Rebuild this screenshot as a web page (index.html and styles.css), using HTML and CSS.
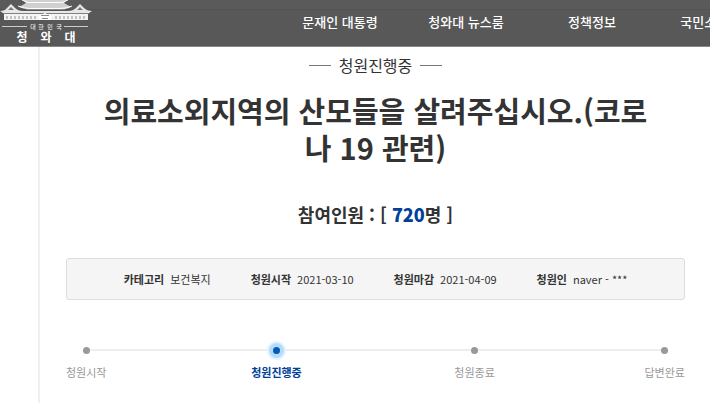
FILE: index.html
```html
<!DOCTYPE html>
<html lang="ko">
<head>
    <meta charset="UTF-8">
    <meta name="viewport" content="width=device-width, initial-scale=1.0">
    <title>국민청원 - 청와대</title>
    <link rel="stylesheet" href="styles.css">
</head>
<body>
    <header class="header">
        <a class="logo" href="#" aria-label="대한민국 청와대">
            <svg width="92" height="46" viewBox="0 0 92 46">
                <!-- upper roof -->
                <path d="M23 0H67L64 3L71 7Q68 9 62 9H29Q23 9 19 7L26 3Z" fill="#d0d0d0"/>
                <path d="M22 0L28 2.5H62L68 0M18 6Q24 8.5 30 8.5H60Q66 8.5 72 6" fill="none" stroke="#fff" stroke-width="1"/>
                <path d="M26 9.5H65" stroke="#8a8a8a" stroke-width="1"/>
                <!-- side roofs -->
                <path d="M0 11Q5 11 7 8L11 4L15 8Q18 11 23 11H68Q73 11 76 8L80 4L84 8Q87 11 92 11L89 13H3Z" fill="#e8e8e8"/>
                <path d="M8 10L11 7L14 10ZM77 10L80 7L83 10Z" fill="#777"/>
                <!-- columns -->
                <path d="M3 13.5H89" stroke="#808080" stroke-width="1"/>
                <path d="M4 14H88V20H4Z" fill="#f4f4f4"/>
                <path d="M7 16V19M11 16V19M15 16V19M19 16V19M23 16V19M27 16V19M31 16V19M35 16V19M56 16V19M60 16V19M64 16V19M68 16V19M72 16V19M76 16V19M80 16V19M84 16V19" stroke="#909090" stroke-width="1"/>
                <path d="M39 16L45 13L51 16V20H39Z" fill="#fff"/>
                <path d="M41 15.5H49M42 18.5H48" stroke="#8b8b8b" stroke-width="1"/>
                <path d="M2 26.5H27M64 26.5H88" stroke="#ccc" stroke-width="1"/>
                <g class="logo-country">
                    <text x="33" y="29">대</text>
                    <text x="41" y="29">한</text>
                    <text x="50" y="29">민</text>
                    <text x="59" y="29">국</text>
                </g>
                <g class="logo-name">
                    <text x="22" y="42">청</text>
                    <text x="46" y="42">와</text>
                    <text x="70" y="42">대</text>
                </g>
            </svg>
        </a>
        <nav class="gnb">
            <a href="#">문재인 대통령</a>
            <a href="#">청와대 뉴스룸</a>
            <a href="#">정책정보</a>
            <a href="#">국민소통 광장</a>
        </nav>
    </header>
    <main class="petition">
        <p class="petition-state">청원진행중</p>
        <h1 class="petition-title">의료소외지역의 산모들을 살려주십시오.(코로나 19 관련)</h1>
        <p class="petition-count">참여인원 : [ <strong>720</strong>명 ]</p>
        <dl class="petition-info">
            <div><dt>카테고리</dt><dd>보건복지</dd></div>
            <div><dt>청원시작</dt><dd>2021-03-10</dd></div>
            <div><dt>청원마감</dt><dd>2021-04-09</dd></div>
            <div><dt>청원인</dt><dd>naver - ***</dd></div>
        </dl>
        <ol class="progress">
            <li><span>청원시작</span></li>
            <li class="on" aria-current="step"><span>청원진행중</span></li>
            <li><span>청원종료</span></li>
            <li><span>답변완료</span></li>
        </ol>
    </main>
</body>
</html>
```

FILE: styles.css
```css
* {
    box-sizing: border-box;
}

body {
    display: flex;
    flex-direction: column;
    min-height: 100vh;
    margin: 0;
    overflow-x: hidden;
    font-family: "Noto Sans CJK KR", sans-serif;
    color: #333;
    background-color: #fff;
}

a {
    color: inherit;
    text-decoration: none;
}

p, h1, dl, dd, ol {
    margin: 0;
    padding: 0;
}

/* header */
.header {
    display: flex;
    height: 47px;
    overflow: hidden;
    color: #fff;
    background: linear-gradient(#5a5a5a 9px, #535353 9px, #535353 10px, #585858 10px);
    border-bottom: 1px solid #888;
}

.logo {
    flex: none;
    width: 277px;
}

.logo svg {
    display: block;
}

.logo text {
    fill: #fff;
    text-anchor: middle;
    font-family: "Noto Sans CJK KR", sans-serif;
}

.logo-country {
    font-size: 6px;
}

.logo-name {
    font-size: 12px;
    font-weight: 700;
}

.gnb {
    display: flex;
    flex: none;
}

.gnb a {
    width: 126px;
    font-size: 13px;
    font-weight: 500;
    line-height: 44px;
    text-align: center;
    white-space: nowrap;
}

/* petition */
.petition {
    flex: 1;
    margin-left: 38px;
    padding: 8px 25px 20px 26px;
    border-left: 2px solid #f0f0f0;
}

.petition-state {
    display: flex;
    justify-content: center;
    align-items: center;
    gap: 8px;
    font-size: 16px;
    line-height: 20px;
}

.petition-state::before,
.petition-state::after {
    content: "";
    width: 22px;
    height: 1px;
    background-color: #777;
}

.petition-title {
    padding: 0 30px;
    margin-top: 17px;
    font-size: 29px;
    font-weight: 700;
    line-height: 37px;
    text-align: center;
}

.petition-count {
    margin-top: 32px;
    font-size: 18px;
    font-weight: 700;
    line-height: 32px;
    text-align: center;
}

.petition-count strong {
    color: #004098;
}

.petition-info {
    display: flex;
    justify-content: center;
    gap: 40px;
    margin-top: 28px;
    padding: 10px 0;
    font-size: 11px;
    line-height: 20px;
    background-color: #f5f5f5;
    border: 1px solid #ddd;
    border-radius: 3px;
}

.petition-info div {
    display: flex;
    gap: 6px;
}

.petition-info dt {
    font-weight: 700;
}

/* progress */
.progress {
    position: relative;
    display: grid;
    grid-template-columns: 18% 32% 32% 18%;
    margin-top: 41px;
    list-style: none;
    font-size: 11px;
    line-height: 20px;
    color: #999;
}

.progress::before {
    content: "";
    position: absolute;
    top: 8px;
    left: 20px;
    right: 20px;
    height: 2px;
    background-color: #eee;
}

.progress li {
    position: relative;
    justify-self: center;
}

.progress li:first-child {
    justify-self: start;
}

.progress li:last-child {
    justify-self: end;
}

.progress li::before {
    content: "";
    display: block;
    width: 7px;
    height: 7px;
    margin: 6px auto 8px;
    border-radius: 50%;
    background-color: #999;
}

.progress .on {
    font-weight: 700;
    color: #004098;
}

.progress .on::before {
    background-color: #005bb9;
    box-shadow: 0 0 0 4px #b5dbfa, 0 0 0 6px #e3f3ff;
}
```
